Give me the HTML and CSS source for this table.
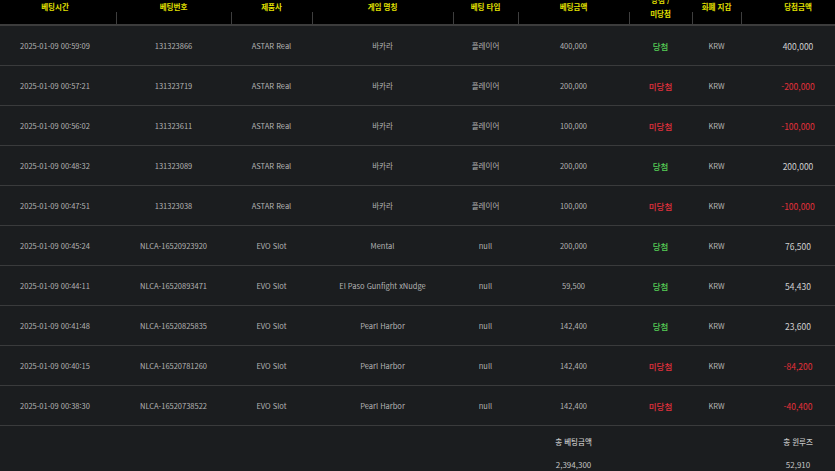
FILE: index.html
```html
<!DOCTYPE html>
<html lang="ko">
<head>
<meta charset="utf-8">
<link rel="stylesheet" href="styles.css">
</head>
<body>
<div class="bets">
  <div class="row head">
    <div class="c c1">베팅시간</div>
    <div class="c sep">베팅번호</div>
    <div class="c sep">제품사</div>
    <div class="c sep">게임 명칭</div>
    <div class="c sep">베팅 타입</div>
    <div class="c sep">베팅금액</div>
    <div class="c sep">당첨 /<br>미당첨</div>
    <div class="c sep">화폐 지갑</div>
    <div class="c sep c9">당첨금액</div>
  </div>

  <div class="row"><div class="c c1">2025-01-09 00:59:09</div><div class="c">131323866</div><div class="c">ASTAR Real</div><div class="c">바카라</div><div class="c">플레이어</div><div class="c">400,000</div><div class="c win">당첨</div><div class="c">KRW</div><div class="c c9 amt">400,000</div></div>
  <div class="row"><div class="c c1">2025-01-09 00:57:21</div><div class="c">131323719</div><div class="c">ASTAR Real</div><div class="c">바카라</div><div class="c">플레이어</div><div class="c">200,000</div><div class="c lose">미당첨</div><div class="c">KRW</div><div class="c c9 amt neg">-200,000</div></div>
  <div class="row"><div class="c c1">2025-01-09 00:56:02</div><div class="c">131323611</div><div class="c">ASTAR Real</div><div class="c">바카라</div><div class="c">플레이어</div><div class="c">100,000</div><div class="c lose">미당첨</div><div class="c">KRW</div><div class="c c9 amt neg">-100,000</div></div>
  <div class="row"><div class="c c1">2025-01-09 00:48:32</div><div class="c">131323089</div><div class="c">ASTAR Real</div><div class="c">바카라</div><div class="c">플레이어</div><div class="c">200,000</div><div class="c win">당첨</div><div class="c">KRW</div><div class="c c9 amt">200,000</div></div>
  <div class="row"><div class="c c1">2025-01-09 00:47:51</div><div class="c">131323038</div><div class="c">ASTAR Real</div><div class="c">바카라</div><div class="c">플레이어</div><div class="c">100,000</div><div class="c lose">미당첨</div><div class="c">KRW</div><div class="c c9 amt neg">-100,000</div></div>
  <div class="row"><div class="c c1">2025-01-09 00:45:24</div><div class="c">NLCA-16520923920</div><div class="c">EVO Slot</div><div class="c">Mental</div><div class="c">null</div><div class="c">200,000</div><div class="c win">당첨</div><div class="c">KRW</div><div class="c c9 amt">76,500</div></div>
  <div class="row"><div class="c c1">2025-01-09 00:44:11</div><div class="c">NLCA-16520893471</div><div class="c">EVO Slot</div><div class="c">El Paso Gunfight xNudge</div><div class="c">null</div><div class="c">59,500</div><div class="c win">당첨</div><div class="c">KRW</div><div class="c c9 amt">54,430</div></div>
  <div class="row"><div class="c c1">2025-01-09 00:41:48</div><div class="c">NLCA-16520825835</div><div class="c">EVO Slot</div><div class="c">Pearl Harbor</div><div class="c">null</div><div class="c">142,400</div><div class="c win">당첨</div><div class="c">KRW</div><div class="c c9 amt">23,600</div></div>
  <div class="row"><div class="c c1">2025-01-09 00:40:15</div><div class="c">NLCA-16520781260</div><div class="c">EVO Slot</div><div class="c">Pearl Harbor</div><div class="c">null</div><div class="c">142,400</div><div class="c lose">미당첨</div><div class="c">KRW</div><div class="c c9 amt neg">-84,200</div></div>
  <div class="row"><div class="c c1">2025-01-09 00:38:30</div><div class="c">NLCA-16520738522</div><div class="c">EVO Slot</div><div class="c">Pearl Harbor</div><div class="c">null</div><div class="c">142,400</div><div class="c lose">미당첨</div><div class="c">KRW</div><div class="c c9 amt neg">-40,400</div></div>

  <div class="row foot">
    <div class="c c1"></div><div class="c"></div><div class="c"></div><div class="c"></div><div class="c"></div>
    <div class="c"><div class="flabel">총 베팅금액</div><div class="fval">2,394,300</div></div>
    <div class="c"></div><div class="c"></div>
    <div class="c c9"><div class="flabel">총 윈루즈</div><div class="fval">52,910</div></div>
  </div>
</div>
</body>
</html>
```

FILE: styles.css
```css
html, body {
  margin: 0;
  padding: 0;
  background: #1b1d1f;
  overflow: hidden;
}
body {
  font-family: "Noto Sans CJK KR", "Noto Sans", sans-serif;
  font-size: 7.5px;
  color: #b3b3b3;
}
.bets {
  width: 835px;
  margin-top: -10px;
}
.row {
  display: grid;
  grid-template-columns: 116px 115px 81px 141px 65px 111px 63px 49px 94px;
  height: 39px;
  border-bottom: 1px solid #3a3b3c;
  align-items: center;
  text-align: center;
}
.c {
  white-space: nowrap;
  overflow: hidden;
}
.c1 { padding-right: 6px; }
.c9 { padding-left: 20px; }
.head {
  background: #000;
  height: 34px;
  border-bottom: 2px solid #3c3c3c;
  color: #e2e000;
  font-weight: 700;
  font-size: 7.5px;
  line-height: 14px;
}
.head .c {
  height: 34px;
  display: flex;
  flex-direction: column;
  justify-content: center;
}
.head .sep {
  background: linear-gradient(#3e3e3e, #3e3e3e) left bottom / 1px 12px no-repeat;
}
.win {
  color: #55cc55;
  font-size: 8.5px;
  font-weight: 500;
}
.lose {
  color: #e0303c;
  font-size: 8.5px;
  font-weight: 500;
}
.amt {
  color: #cfcfcf;
  font-size: 8.5px;
}
.amt.neg { color: #e3303a; }
.foot {
  height: auto;
  border-bottom: none;
  align-items: start;
  padding-top: 5px;
}
.flabel {
  line-height: 22px;
  color: #c4c4c4;
  font-weight: 500;
}
.fval {
  line-height: 24px;
  color: #c4c4c4;
  font-size: 8px;
}
```
